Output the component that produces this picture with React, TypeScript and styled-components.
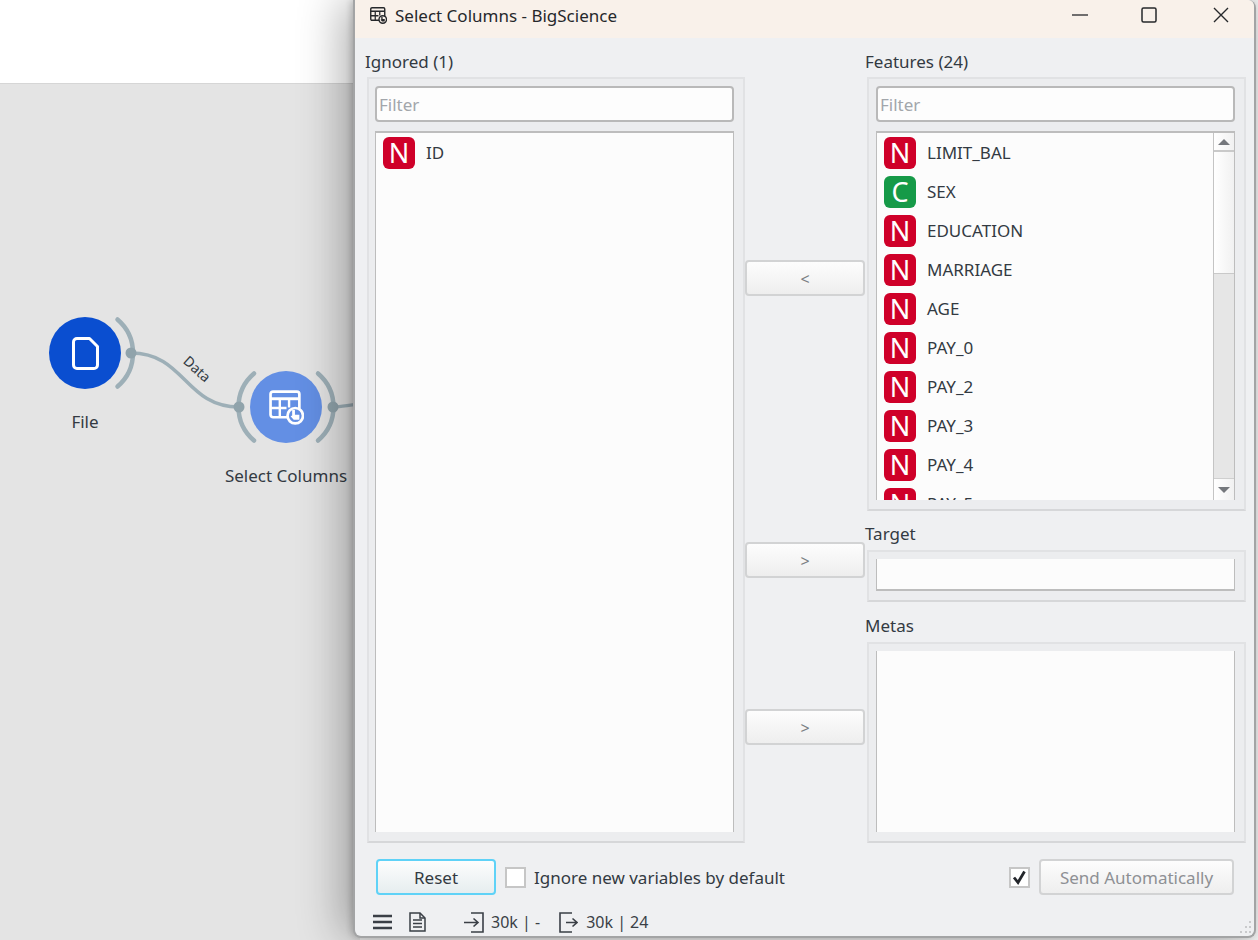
import React from 'react';
import styled, { createGlobalStyle } from 'styled-components';

const GlobalStyle = createGlobalStyle`
  html, body {
    margin: 0;
    padding: 0;
    background: #f2f2f2;
  }
  * {
    box-sizing: border-box;
  }
`;

const UI_FONT = `"Noto Sans", "Open Sans", sans-serif`;

// -- Workflow canvas behind the dialog --

const Desktop = styled.div`
  position: relative;
  width: 1258px;
  height: 940px;
  overflow: hidden;
  font-family: ${UI_FONT};
  color: #333a42;
`;

const Backdrop = styled.div`
  width: 360px;
  height: 100%;
  display: flex;
  flex-direction: column;
`;

const TopStrip = styled.div`
  height: 84px;
  flex: none;
  background: #ffffff;
  border-bottom: 1px solid #d6d6d6;
`;

const Canvas = styled.div`
  position: relative;
  flex: 1;
  background: #e4e4e4;
`;

const LinkLayer = styled.svg`
  position: absolute;
  left: 0;
  top: 0;
`;

const Node = styled.div<{ $x: number; $y: number }>`
  position: absolute;
  left: ${p => p.$x - 100}px;
  top: ${p => p.$y - 84}px;
  width: 200px;
  display: flex;
  flex-direction: column;
  align-items: center;
`;

const NodeDisc = styled.div<{ $color: string }>`
  width: 72px;
  height: 72px;
  border-radius: 50%;
  background: ${p => p.$color};
  color: #ffffff;
  display: flex;
  align-items: center;
  justify-content: center;
`;

const NodeTitle = styled.div`
  margin-top: 20px;
  font-size: 17px;
  line-height: 26px;
  white-space: nowrap;
`;

const LinkTitle = styled.div`
  position: absolute;
  left: 177px;
  top: 276px;
  width: 40px;
  text-align: center;
  font-size: 14px;
  line-height: 18px;
  transform: rotate(42deg);
`;

// -- Dialog window --

const Dialog = styled.div`
  position: absolute;
  left: 353px;
  top: 0;
  width: 903px;
  height: 938px;
  display: flex;
  flex-direction: column;
  background: #eff0f2;
  border: 2px solid #a3a4a5;
  border-top: none;
  border-radius: 0 8px 8px 8px;
  box-shadow: -12px 0 44px rgba(0, 0, 0, 0.3), -2px 0 6px rgba(0, 0, 0, 0.18);
`;

const TitleBar = styled.div`
  height: 38px;
  flex: none;
  display: flex;
  align-items: center;
  padding-left: 15px;
  background: #f9f1ea;
  border-top-right-radius: 6px;
  color: #26282b;
`;

const TitleIcon = styled.div`
  width: 17px;
  height: 17px;
  margin: 0 8px 7px 0;
  display: flex;
`;

const TitleText = styled.div`
  flex: 1;
  font-size: 17px;
  line-height: 30px;
  margin-bottom: 6px;
`;

const WindowButton = styled.div<{ $nudge: number }>`
  width: 70px;
  height: 100%;
  display: flex;
  align-items: center;
  justify-content: center;
  padding: 0 0 8px ${p => p.$nudge}px;
`;

const Panels = styled.div`
  display: grid;
  grid-template-columns: 380px 120px 381px;
  grid-template-rows: 462px 81px 229px;
  row-gap: 11px;
  margin: 11px 0 0 10px;
`;

const Column = styled.div<{ $span?: boolean }>`
  display: flex;
  flex-direction: column;
  ${p => p.$span && 'grid-row: 1 / span 3;'}
`;

const PaneLabel = styled.div<{ $raised?: boolean }>`
  height: 28px;
  flex: none;
  font-size: 17px;
  line-height: ${p => (p.$raised ? '24px' : '26px')};
`;

const GroupBox = styled.div<{ $fixed?: number; $inset: number }>`
  ${p => (p.$fixed ? `height: ${p.$fixed}px; flex: none;` : 'flex: 1; min-height: 0;')}
  margin-left: 2px;
  display: flex;
  flex-direction: column;
  gap: 9px;
  padding: 7px 9px 9px ${p => p.$inset}px;
  background: #ecedef;
  border: 2px solid #e1e2e4;
  border-bottom-color: #d6d7d9;
`;

const FilterInput = styled.input`
  height: 36px;
  flex: none;
  width: 100%;
  padding: 0 2px;
  font-family: ${UI_FONT};
  font-size: 17px;
  background: #fdfdfd;
  border: 2px solid #b9b9b9;
  border-radius: 4px;
  outline: none;

  &::placeholder {
    color: #a2a6ab;
    opacity: 1;
  }
`;

const ListFrame = styled.div<{ $edge: 'top' | 'bottom' | 'none' }>`
  flex: 1;
  min-height: 0;
  display: flex;
  overflow: hidden;
  background: #fcfcfc;
  border-left: 1px solid #bdbdbd;
  border-right: 1px solid #bdbdbd;
  border-top: ${p => (p.$edge === 'top' ? '2px solid #bdbdbd' : 'none')};
  border-bottom: ${p => (p.$edge === 'bottom' ? '2px solid #bdbdbd' : 'none')};
`;

const ListRows = styled.div`
  flex: 1;
  min-width: 0;
`;

const VarRow = styled.div`
  height: 39px;
  display: flex;
  align-items: center;
  gap: 11px;
  padding-left: 7px;
`;

const VarBadge = styled.div<{ $kind: 'N' | 'C' }>`
  width: 32px;
  height: 32px;
  border-radius: 6px;
  flex: none;
  display: flex;
  align-items: center;
  justify-content: center;
  background: ${p => (p.$kind === 'N' ? '#cf0029' : '#169a48')};
  color: #ffffff;
  font-size: 27px;
  line-height: 32px;
`;

const VarName = styled.div`
  font-size: 17px;
  color: #333a42;
`;

const ScrollBar = styled.div`
  width: 21px;
  flex: none;
  display: flex;
  flex-direction: column;
  border-left: 1px solid #c4c4c4;
  background: #e6e6e6;
`;

const ScrollArrow = styled.div<{ $down?: boolean }>`
  height: ${p => (p.$down ? '22px' : '19px')};
  flex: none;
  display: flex;
  align-items: center;
  justify-content: center;
  background: linear-gradient(90deg, #ffffff, #f1f1f1);
  ${p => (p.$down ? 'border-top: 1px solid #cfcfcf;' : 'border-bottom: 2px solid #c9c9c9;')}

  &::after {
    content: '';
    border-left: 6px solid transparent;
    border-right: 6px solid transparent;
    ${p => (p.$down ? 'border-top: 6px solid #74777c;' : 'border-bottom: 6px solid #74777c;')}
  }
`;

const ScrollHandle = styled.div`
  height: 122px;
  flex: none;
  background: linear-gradient(90deg, #ffffff, #f1f1f1);
  border-bottom: 1px solid #c9c9c9;
`;

const ScrollTrack = styled.div`
  flex: 1;
`;

const MoveCell = styled.div<{ $lift: number }>`
  display: flex;
  align-items: center;
  padding-bottom: ${p => p.$lift}px;
`;

const PushButton = styled.button<{ $width: number; $focus?: boolean; $muted?: boolean }>`
  width: ${p => p.$width}px;
  height: 36px;
  flex: none;
  padding: 1px 0 0;
  font-family: ${UI_FONT};
  font-size: 17px;
  color: ${p => (p.$muted ? '#8e9094' : '#333a42')};
  border: 2px solid ${p => (p.$focus ? '#5fd2f7' : '#d2d3d4')};
  border-radius: 4px;
  background: linear-gradient(180deg, #fdfdfd, ${p => (p.$focus ? '#e6edef' : '#eeeeee')});
`;

const ArrowLabel = styled.span`
  font-size: 16px;
  color: #7b7e83;
`;

const ActionRow = styled.div`
  display: flex;
  align-items: center;
  height: 36px;
  margin-top: 16px;
  padding: 0 20px 0 21px;
`;

const CheckBox = styled.div<{ $on?: boolean }>`
  width: 21px;
  height: 21px;
  flex: none;
  display: flex;
  align-items: center;
  justify-content: center;
  background: #ffffff;
  border: 2px solid #c6c6c6;
  margin: ${p => (p.$on ? '0 9px 0 0' : '0 8px 0 9px')};
`;

const CheckLabel = styled.div`
  flex: 1;
  font-size: 17px;
`;

const StatusBar = styled.div`
  flex: 1;
  position: relative;
  display: flex;
  align-items: center;
  padding: 13px 0 0 18px;
  color: #3a3f46;
`;

const StatusIcon = styled.div<{ $after: number }>`
  display: flex;
  margin-right: ${p => p.$after}px;
`;

const StatusText = styled.div<{ $after?: number }>`
  font-size: 16px;
  line-height: 22px;
  margin-right: ${p => p.$after ?? 0}px;
`;

const Grip = styled.svg`
  position: absolute;
  right: 2px;
  bottom: 2px;
`;

// -- Drawn icons --

const TableHandIcon = ({ size, fill, weight }: { size: number; fill: string; weight: number }) => (
  <svg width={size} height={size} viewBox="0 0 34 34" fill="none" stroke="currentColor" strokeWidth={weight}>
    <rect x="1.500" y="1.500" width="28" height="25" rx="2.500" />
    <path d="M1.500 8.500H29.500" strokeWidth={weight * 1.1} />
    <path d="M10.500 8.500V26.500M19.500 8.500V17M1.500 17.500H17" strokeWidth={weight * 0.9} />
    <circle cx="25.500" cy="25" r="7.500" fill={fill} />
    <path d="M22.500 19.500H25.200V24H29.500V29H24L21 25.500L22.500 24.800Z" fill="currentColor" stroke="none" />
  </svg>
);

const FileIcon = () => (
  <svg width="27" height="33" viewBox="0 0 27 33" fill="none" stroke="currentColor" strokeWidth="3" strokeLinejoin="round">
    <path d="M5 1.500H17.500L25.500 9.500V28A3.500 3.500 0 0 1 22 31.500H5A3.500 3.500 0 0 1 1.500 28V5A3.500 3.500 0 0 1 5 1.500Z" />
    <path d="M18 6.500L21 9.500H18Z" fill="#0a4ed0" stroke="none" />
  </svg>
);

const MenuIcon = () => (
  <svg width="19" height="16" viewBox="0 0 19 16" stroke="currentColor" strokeWidth="2.600">
    <path d="M0 2H19M0 8H19M0 14H19" />
  </svg>
);

const DocIcon = () => (
  <svg width="17" height="20" viewBox="0 0 17 20" fill="none" stroke="currentColor" strokeWidth="1.500">
    <path d="M1 1H11L16 6V19H1Z" />
    <path d="M11 1V6H16M4 8H13M4 11.500H13M4 15H13" />
  </svg>
);

const InputIcon = () => (
  <svg width="20" height="21" viewBox="0 0 20 21" fill="none" stroke="currentColor" strokeWidth="1.600">
    <path d="M7 1H19V20H7M0 10.500H13M9.500 6.500L14 10.500L9.500 14.500" />
  </svg>
);

const OutputIcon = () => (
  <svg width="19" height="21" viewBox="0 0 19 21" fill="none" stroke="currentColor" strokeWidth="1.600">
    <path d="M13 1H1V20H13M7 10.500H18M13.500 6.500L18 10.500L13.500 14.500" />
  </svg>
);

// -- Data --

const FEATURES: { kind: 'N' | 'C'; name: string }[] = [
  { kind: 'N', name: 'LIMIT_BAL' },
  { kind: 'C', name: 'SEX' },
  { kind: 'N', name: 'EDUCATION' },
  { kind: 'N', name: 'MARRIAGE' },
  { kind: 'N', name: 'AGE' },
  { kind: 'N', name: 'PAY_0' },
  { kind: 'N', name: 'PAY_2' },
  { kind: 'N', name: 'PAY_3' },
  { kind: 'N', name: 'PAY_4' },
  { kind: 'N', name: 'PAY_5' },
];

const VarItem = ({ kind, name }: { kind: 'N' | 'C'; name: string }) => (
  <VarRow>
    <VarBadge $kind={kind}>{kind}</VarBadge>
    <VarName>{name}</VarName>
  </VarRow>
);

const App: React.FC = () => {
  return (
    <Desktop>
      <GlobalStyle />

      <Backdrop>
        <TopStrip />
        <Canvas>
          <LinkLayer width="360" height="856" viewBox="0 84 360 856" fill="none">
            <g stroke="#9dafb7" strokeWidth="4.500" strokeLinecap="round">
              <path d="M131 353C185 353 185 407 239 407" strokeWidth="3.500" />
              <path d="M333 407C342 407 348 405 360 404" strokeWidth="3.500" />
              <path d="M117.500 319.500A44 44 0 0 1 117.500 386.500" />
              <path d="M254 373.500A44 44 0 0 0 254 440.500" />
              <path d="M318 373.500A44 44 0 0 1 318 440.500" />
            </g>
            <g fill="#90a3ab">
              <circle cx="131" cy="353" r="5.500" />
              <circle cx="239" cy="407" r="5.500" />
              <circle cx="333" cy="407" r="5.500" />
            </g>
          </LinkLayer>

          <Node $x={85} $y={317}>
            <NodeDisc $color="#0a4ed0">
              <FileIcon />
            </NodeDisc>
            <NodeTitle>File</NodeTitle>
          </Node>

          <Node $x={286} $y={371}>
            <NodeDisc $color="#638fe4">
              <TableHandIcon size={35} fill="#638fe4" weight={2.600} />
            </NodeDisc>
            <NodeTitle>Select Columns</NodeTitle>
          </Node>

          <LinkTitle>Data</LinkTitle>
        </Canvas>
      </Backdrop>

      <Dialog>
        <TitleBar>
          <TitleIcon>
            <TableHandIcon size={17} fill="#f9f1ea" weight={2.800} />
          </TitleIcon>
          <TitleText>Select Columns - BigScience</TitleText>
          <WindowButton $nudge={2}>
            <svg width="16" height="2" viewBox="0 0 16 2" stroke="#26282b" strokeWidth="1.300">
              <path d="M0 1H16" />
            </svg>
          </WindowButton>
          <WindowButton $nudge={0}>
            <svg width="16" height="16" viewBox="0 0 16 16" fill="none" stroke="#26282b" strokeWidth="1.500">
              <rect x="1" y="1" width="14" height="14" rx="1.500" />
            </svg>
          </WindowButton>
          <WindowButton $nudge={3}>
            <svg width="16" height="16" viewBox="0 0 16 16" fill="none" stroke="#26282b" strokeWidth="1.400">
              <path d="M1 1L15 15M15 1L1 15" />
            </svg>
          </WindowButton>
        </TitleBar>

        <Panels>
          <Column $span>
            <PaneLabel>Ignored (1)</PaneLabel>
            <GroupBox $inset={6}>
              <FilterInput placeholder="Filter" readOnly />
              <ListFrame $edge="top">
                <ListRows>
                  <VarItem kind="N" name="ID" />
                </ListRows>
              </ListFrame>
            </GroupBox>
          </Column>

          <MoveCell $lift={4}>
            <PushButton $width={120}><ArrowLabel>&lt;</ArrowLabel></PushButton>
          </MoveCell>

          <Column>
            <PaneLabel>Features (24)</PaneLabel>
            <GroupBox $inset={7}>
              <FilterInput placeholder="Filter" readOnly />
              <ListFrame $edge="top">
                <ListRows>
                  {FEATURES.map(f => (
                    <VarItem key={f.name} kind={f.kind} name={f.name} />
                  ))}
                </ListRows>
                <ScrollBar>
                  <ScrollArrow />
                  <ScrollHandle />
                  <ScrollTrack />
                  <ScrollArrow $down />
                </ScrollBar>
              </ListFrame>
            </GroupBox>
          </Column>

          <MoveCell $lift={5}>
            <PushButton $width={120}><ArrowLabel>&gt;</ArrowLabel></PushButton>
          </MoveCell>

          <Column>
            <PaneLabel $raised>Target</PaneLabel>
            <GroupBox $fixed={52} $inset={7}>
              <ListFrame $edge="bottom" />
            </GroupBox>
          </Column>

          <MoveCell $lift={3}>
            <PushButton $width={120}><ArrowLabel>&gt;</ArrowLabel></PushButton>
          </MoveCell>

          <Column>
            <PaneLabel $raised>Metas</PaneLabel>
            <GroupBox $inset={7}>
              <ListFrame $edge="none" />
            </GroupBox>
          </Column>
        </Panels>

        <ActionRow>
          <PushButton $width={120} $focus>Reset</PushButton>
          <CheckBox />
          <CheckLabel>Ignore new variables by default</CheckLabel>
          <CheckBox $on>
            <svg width="15" height="15" viewBox="0 0 15 15" fill="none" stroke="#23262b" strokeWidth="2.800">
              <path d="M2 7.500L6 12.500L12.500 1.500" />
            </svg>
          </CheckBox>
          <PushButton $width={195} $muted>Send Automatically</PushButton>
        </ActionRow>

        <StatusBar>
          <StatusIcon $after={17}><MenuIcon /></StatusIcon>
          <StatusIcon $after={38}><DocIcon /></StatusIcon>
          <StatusIcon $after={7}><InputIcon /></StatusIcon>
          <StatusText $after={19}>30k | -</StatusText>
          <StatusIcon $after={8}><OutputIcon /></StatusIcon>
          <StatusText>30k | 24</StatusText>
          <Grip width="14" height="14" viewBox="0 0 14 14" fill="#c9cacc">
            <rect x="11" y="1" width="2" height="2" />
            <rect x="7" y="6" width="2" height="2" />
            <rect x="11" y="6" width="2" height="2" />
            <rect x="2" y="11" width="2" height="2" />
            <rect x="7" y="11" width="2" height="2" />
            <rect x="11" y="11" width="2" height="2" />
          </Grip>
        </StatusBar>
      </Dialog>
    </Desktop>
  );
};

export default App;
